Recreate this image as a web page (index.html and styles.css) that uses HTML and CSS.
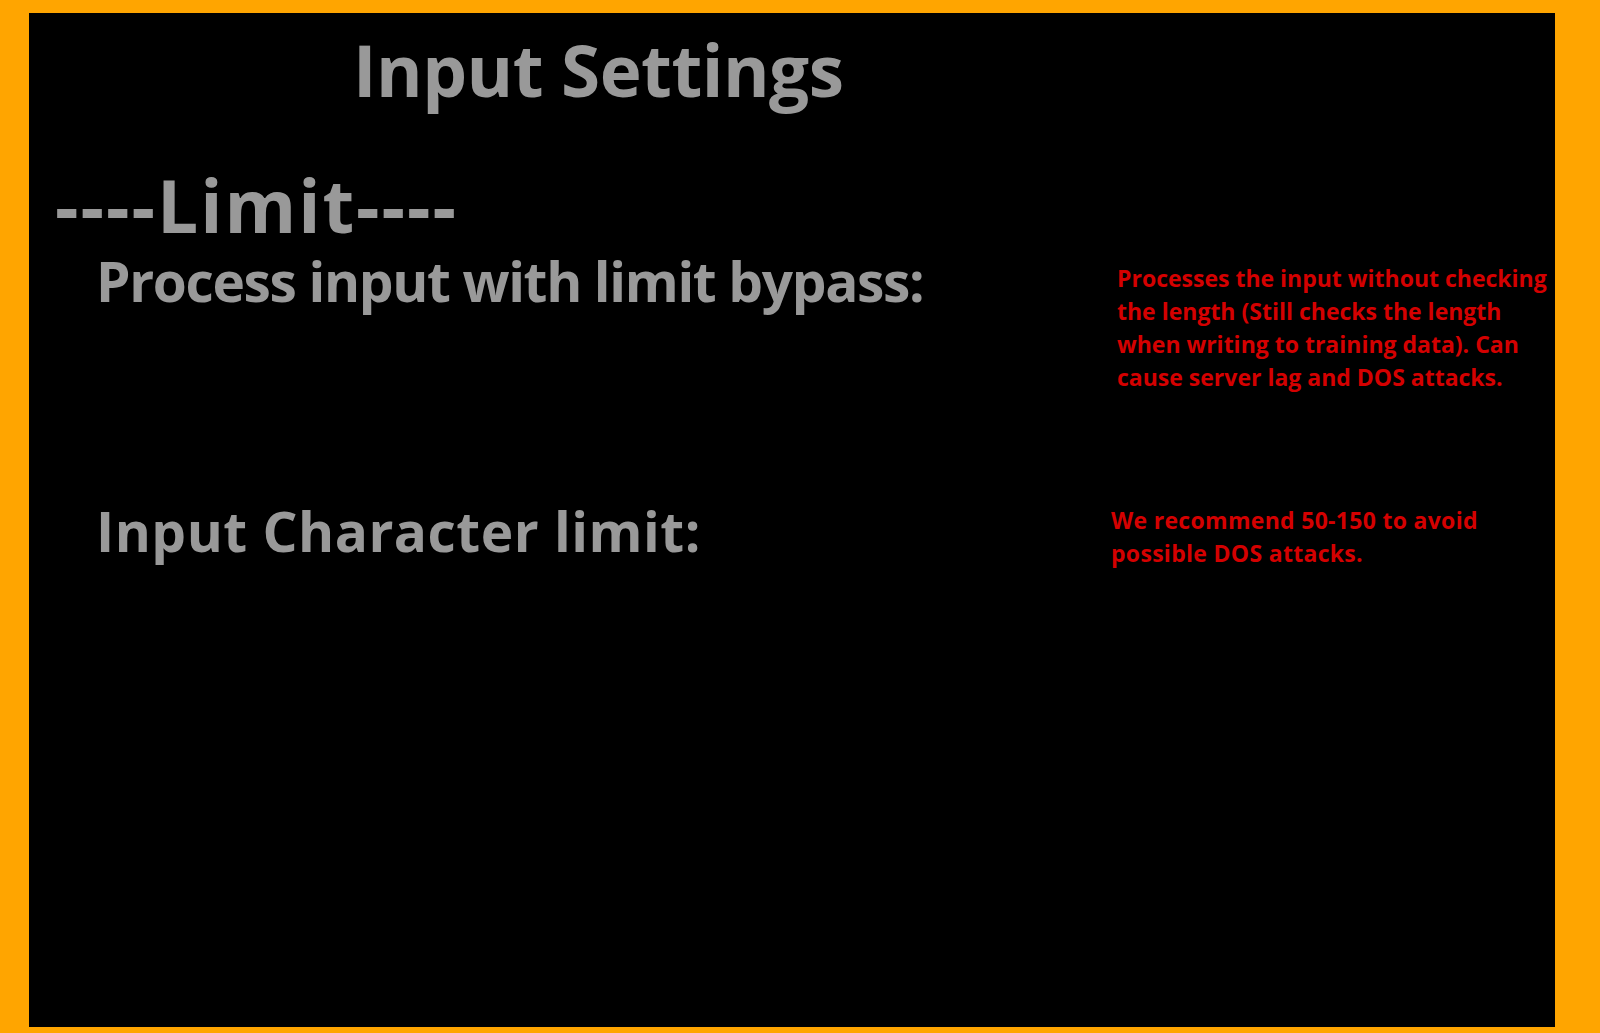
FILE: index.html
```html
<!DOCTYPE html>
<html lang="en">
<head>
<meta charset="utf-8">
<title>Input Settings</title>
<link rel="stylesheet" href="styles.css">
</head>
<body>
<main class="panel">
  <h1 class="title">Input Settings</h1>
  <section class="group">
    <h2 class="group-title">----Limit----</h2>
    <div class="setting setting-bypass">
      <div class="label label-bypass">Process input with limit bypass:</div>
      <p class="desc">Processes the input without checking<br>the length (Still checks the length<br>when writing to training data). Can<br>cause server lag and DOS attacks.</p>
    </div>
    <div class="setting setting-limit">
      <div class="label label-limit">Input Character limit:</div>
      <p class="desc desc-shift">We recommend 50-150 to avoid<br>possible DOS attacks.</p>
    </div>
  </section>
</main>
</body>
</html>
```

FILE: styles.css
```css
html, body {
  margin: 0;
  padding: 0;
}
body {
  background: #ffa500;
  width: 1600px;
  height: 1033px;
  overflow: hidden;
  font-family: "Open Sans", "Noto Sans", sans-serif;
  font-weight: 700;
}
.panel {
  margin: 13px 45px 0 29px;
  height: 1014px;
  background: #000;
  padding-top: 22px;
  box-sizing: border-box;
}
.title {
  margin: 0;
  padding-left: 324px;
  font-size: 71px;
  line-height: 70px;
  font-weight: 700;
  letter-spacing: -0.5px;
  color: #999999;
}
.group {
  margin-top: 70px;
}
.group-title {
  margin: 0;
  padding-left: 26px;
  font-size: 73px;
  line-height: 60px;
  font-weight: 700;
  letter-spacing: 2px;
  color: #999999;
}
.setting {
  display: grid;
  grid-template-columns: 1088px 1fr;
  align-items: start;
}
.setting-bypass {
  margin-top: 16px;
}
.setting-limit {
  margin-top: 107px;
}
.label {
  padding-left: 67px;
  font-size: 55px;
  line-height: 60px;
  color: #999999;
  white-space: nowrap;
}
.label-bypass {
  letter-spacing: -1.35px;
}
.label-limit {
  letter-spacing: 0.5px;
}
.desc {
  margin: 11px 0 0 0;
  font-size: 23px;
  line-height: 33px;
  color: #d40000;
  white-space: nowrap;
}
.desc-shift {
  margin-left: -6px;
  margin-top: 3px;
  letter-spacing: 0.3px;
}
```
